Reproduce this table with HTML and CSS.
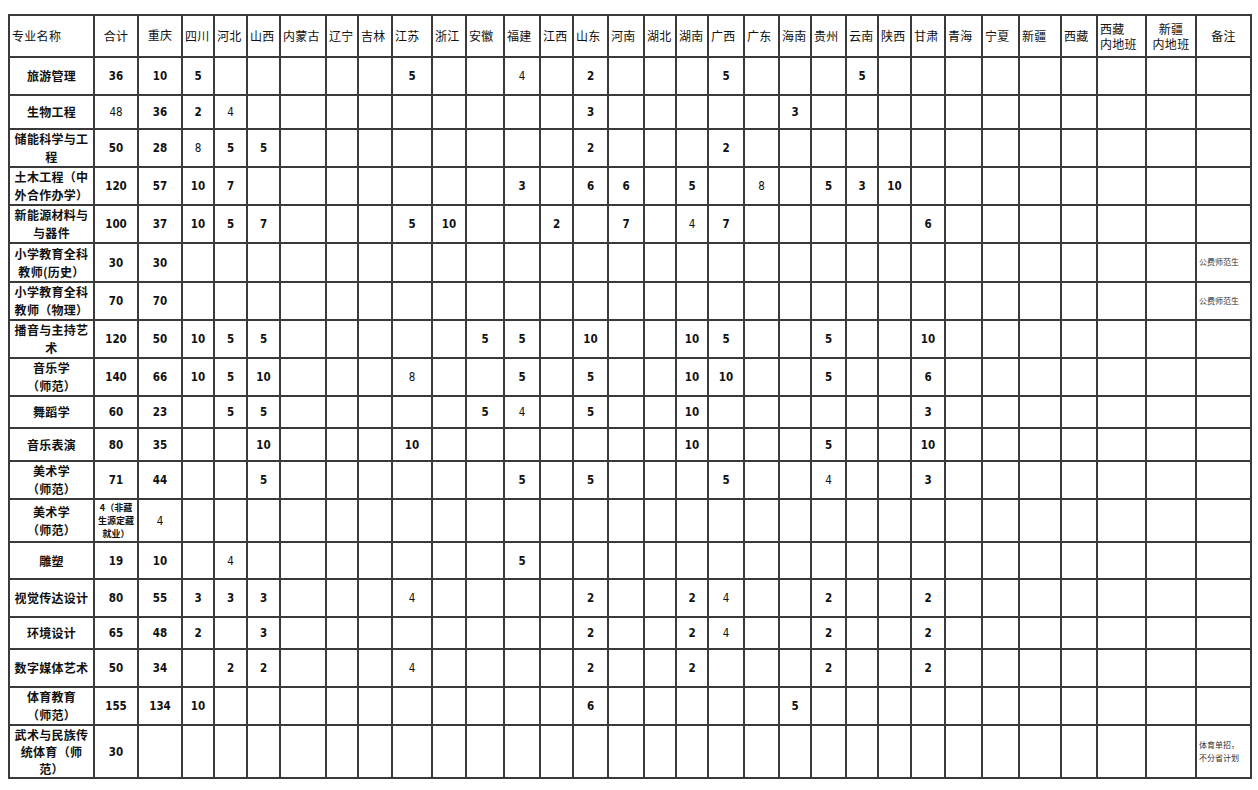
FILE: index.html
```html
<!DOCTYPE html>
<html lang="zh-CN">
<head>
<meta charset="utf-8">
<title>招生计划</title>
<link rel="stylesheet" href="styles.css">
</head>
<body>
<table class="sheet">
<colgroup>
<col class="w85"><col class="w44"><col class="w44"><col class="w32"><col class="w33"><col class="w33"><col class="w46"><col class="w32"><col class="w34"><col class="w40"><col class="w34"><col class="w38"><col class="w36"><col class="w33"><col class="w35"><col class="w36"><col class="w32"><col class="w32"><col class="w36"><col class="w35"><col class="w32"><col class="w35"><col class="w32"><col class="w33"><col class="w34"><col class="w37"><col class="w37"><col class="w42"><col class="w36"><col class="w49"><col class="w50"><col class="w55">
</colgroup>
<thead>
<tr class="h42">
<th>专业名称</th><th class="c">合计</th><th class="c up">重庆</th><th>四川</th><th>河北</th><th>山西</th><th>内蒙古</th><th>辽宁</th><th>吉林</th><th>江苏</th><th>浙江</th><th>安徽</th><th>福建</th><th>江西</th><th>山东</th><th>河南</th><th>湖北</th><th>湖南</th><th>广西</th><th>广东</th><th>海南</th><th>贵州</th><th>云南</th><th>陕西</th><th>甘肃</th><th>青海</th><th>宁夏</th><th>新疆</th><th>西藏</th><th class="two"><span class="ln">西藏</span><span class="ln">内地班</span></th><th class="c two"><span class="ln">新疆</span><span class="ln">内地班</span></th><th class="c">备注</th>
</tr>
</thead>
<tbody>
<tr class="h38"><td class="nm">旅游管理</td><td>36</td><td>10</td><td>5</td><td></td><td></td><td></td><td></td><td></td><td>5</td><td></td><td></td><td class="lt">4</td><td></td><td>2</td><td></td><td></td><td></td><td>5</td><td></td><td></td><td></td><td>5</td><td></td><td></td><td></td><td></td><td></td><td></td><td></td><td></td><td></td></tr>
<tr class="h34"><td class="nm">生物工程</td><td class="lt">48</td><td>36</td><td>2</td><td class="lt">4</td><td></td><td></td><td></td><td></td><td></td><td></td><td></td><td></td><td></td><td>3</td><td></td><td></td><td></td><td></td><td></td><td>3</td><td></td><td></td><td></td><td></td><td></td><td></td><td></td><td></td><td></td><td></td><td></td></tr>
<tr class="h38"><td class="nm">储能科学与工程</td><td>50</td><td>28</td><td class="lt">8</td><td>5</td><td>5</td><td></td><td></td><td></td><td></td><td></td><td></td><td></td><td></td><td>2</td><td></td><td></td><td></td><td>2</td><td></td><td></td><td></td><td></td><td></td><td></td><td></td><td></td><td></td><td></td><td></td><td></td><td></td></tr>
<tr class="h38"><td class="nm">土木工程（中外合作办学）</td><td>120</td><td>57</td><td>10</td><td>7</td><td></td><td></td><td></td><td></td><td></td><td></td><td></td><td>3</td><td></td><td>6</td><td>6</td><td></td><td>5</td><td></td><td class="lt">8</td><td></td><td>5</td><td>3</td><td>10</td><td></td><td></td><td></td><td></td><td></td><td></td><td></td><td></td></tr>
<tr class="h37"><td class="nm">新能源材料与与器件</td><td>100</td><td>37</td><td>10</td><td>5</td><td>7</td><td></td><td></td><td></td><td>5</td><td>10</td><td></td><td></td><td>2</td><td></td><td>7</td><td></td><td class="lt">4</td><td>7</td><td></td><td></td><td></td><td></td><td></td><td>6</td><td></td><td></td><td></td><td></td><td></td><td></td><td></td></tr>
<tr class="h39"><td class="nm">小学教育全科教师(历史）</td><td>30</td><td>30</td><td></td><td></td><td></td><td></td><td></td><td></td><td></td><td></td><td></td><td></td><td></td><td></td><td></td><td></td><td></td><td></td><td></td><td></td><td></td><td></td><td></td><td></td><td></td><td></td><td></td><td></td><td></td><td></td><td class="rm">公费师范生</td></tr>
<tr class="h37"><td class="nm">小学教育全科教师（物理）</td><td>70</td><td>70</td><td></td><td></td><td></td><td></td><td></td><td></td><td></td><td></td><td></td><td></td><td></td><td></td><td></td><td></td><td></td><td></td><td></td><td></td><td></td><td></td><td></td><td></td><td></td><td></td><td></td><td></td><td></td><td></td><td class="rm">公费师范生</td></tr>
<tr class="h38"><td class="nm">播音与主持艺术</td><td>120</td><td>50</td><td>10</td><td>5</td><td>5</td><td></td><td></td><td></td><td></td><td></td><td>5</td><td>5</td><td></td><td>10</td><td></td><td></td><td>10</td><td>5</td><td></td><td></td><td>5</td><td></td><td></td><td>10</td><td></td><td></td><td></td><td></td><td></td><td></td><td></td></tr>
<tr class="h38"><td class="nm">音乐学<br>（师范）</td><td>140</td><td>66</td><td>10</td><td>5</td><td>10</td><td></td><td></td><td></td><td class="lt">8</td><td></td><td></td><td>5</td><td></td><td>5</td><td></td><td></td><td>10</td><td>10</td><td></td><td></td><td>5</td><td></td><td></td><td>6</td><td></td><td></td><td></td><td></td><td></td><td></td><td></td></tr>
<tr class="h32"><td class="nm">舞蹈学</td><td>60</td><td>23</td><td></td><td>5</td><td>5</td><td></td><td></td><td></td><td></td><td></td><td>5</td><td class="lt">4</td><td></td><td>5</td><td></td><td></td><td>10</td><td></td><td></td><td></td><td></td><td></td><td></td><td>3</td><td></td><td></td><td></td><td></td><td></td><td></td><td></td></tr>
<tr class="h33"><td class="nm">音乐表演</td><td>80</td><td>35</td><td></td><td></td><td>10</td><td></td><td></td><td></td><td>10</td><td></td><td></td><td></td><td></td><td></td><td></td><td></td><td>10</td><td></td><td></td><td></td><td>5</td><td></td><td></td><td>10</td><td></td><td></td><td></td><td></td><td></td><td></td><td></td></tr>
<tr class="h38"><td class="nm">美术学<br>（师范）</td><td>71</td><td>44</td><td></td><td></td><td>5</td><td></td><td></td><td></td><td></td><td></td><td></td><td>5</td><td></td><td>5</td><td></td><td></td><td></td><td>5</td><td></td><td></td><td class="lt">4</td><td></td><td></td><td>3</td><td></td><td></td><td></td><td></td><td></td><td></td><td></td></tr>
<tr class="h43"><td class="nm">美术学<br>（师范）</td><td class="sm">4（非藏<br>生源定藏<br>就业）</td><td class="lt">4</td><td></td><td></td><td></td><td></td><td></td><td></td><td></td><td></td><td></td><td></td><td></td><td></td><td></td><td></td><td></td><td></td><td></td><td></td><td></td><td></td><td></td><td></td><td></td><td></td><td></td><td></td><td></td><td></td><td></td></tr>
<tr class="h37"><td class="nm">雕塑</td><td>19</td><td>10</td><td></td><td class="lt">4</td><td></td><td></td><td></td><td></td><td></td><td></td><td></td><td>5</td><td></td><td></td><td></td><td></td><td></td><td></td><td></td><td></td><td></td><td></td><td></td><td></td><td></td><td></td><td></td><td></td><td></td><td></td><td></td></tr>
<tr class="h38"><td class="nm">视觉传达设计</td><td>80</td><td>55</td><td>3</td><td>3</td><td>3</td><td></td><td></td><td></td><td class="lt">4</td><td></td><td></td><td></td><td></td><td>2</td><td></td><td></td><td>2</td><td class="lt">4</td><td></td><td></td><td>2</td><td></td><td></td><td>2</td><td></td><td></td><td></td><td></td><td></td><td></td><td></td></tr>
<tr class="h32"><td class="nm">环境设计</td><td>65</td><td>48</td><td>2</td><td></td><td>3</td><td></td><td></td><td></td><td></td><td></td><td></td><td></td><td></td><td>2</td><td></td><td></td><td>2</td><td class="lt">4</td><td></td><td></td><td>2</td><td></td><td></td><td>2</td><td></td><td></td><td></td><td></td><td></td><td></td><td></td></tr>
<tr class="h38"><td class="nm">数字媒体艺术</td><td>50</td><td>34</td><td></td><td>2</td><td>2</td><td></td><td></td><td></td><td class="lt">4</td><td></td><td></td><td></td><td></td><td>2</td><td></td><td></td><td>2</td><td></td><td></td><td></td><td>2</td><td></td><td></td><td>2</td><td></td><td></td><td></td><td></td><td></td><td></td><td></td></tr>
<tr class="h38"><td class="nm">体育教育<br>（师范）</td><td>155</td><td>134</td><td>10</td><td></td><td></td><td></td><td></td><td></td><td></td><td></td><td></td><td></td><td></td><td>6</td><td></td><td></td><td></td><td></td><td></td><td>5</td><td></td><td></td><td></td><td></td><td></td><td></td><td></td><td></td><td></td><td></td><td></td></tr>
<tr class="h53"><td class="nm tight">武术与民族传统体育（师范）</td><td>30</td><td></td><td></td><td></td><td></td><td></td><td></td><td></td><td></td><td></td><td></td><td></td><td></td><td></td><td></td><td></td><td></td><td></td><td></td><td></td><td></td><td></td><td></td><td></td><td></td><td></td><td></td><td></td><td></td><td></td><td class="rm">体育单招，<br>不分省计划</td></tr>
</tbody>
</table>
</body>
</html>
```

FILE: styles.css
```css
html, body {
  margin: 0;
  padding: 0;
  background: #ffffff;
}

.sheet {
  border-collapse: collapse;
  table-layout: fixed;
  width: 1242px;
  margin: 14px 0 0 8px;
}

.w85 { width: 85px; }
.w32 { width: 32px; }
.w33 { width: 33px; }
.w34 { width: 34px; }
.w35 { width: 35px; }
.w36 { width: 36px; }
.w37 { width: 37px; }
.w38 { width: 38px; }
.w40 { width: 40px; }
.w42 { width: 42px; }
.w44 { width: 44px; }
.w46 { width: 46px; }
.w49 { width: 49px; }
.w50 { width: 50px; }
.w55 { width: 55px; }

.h32 { height: 32px; }
.h33 { height: 33px; }
.h34 { height: 34px; }
.h37 { height: 37px; }
.h38 { height: 38px; }
.h39 { height: 39px; }
.h42 { height: 42px; }
.h43 { height: 43px; }
.h53 { height: 53px; }

.sheet th,
.sheet td {
  border: 2px solid #3a3a3a;
  padding: 0 1px;
  vertical-align: middle;
  overflow: hidden;
  color: #111111;
}

.sheet th {
  font-family: "Noto Sans CJK SC", sans-serif;
  font-weight: 400;
  font-size: 12px;
  line-height: 14px;
  letter-spacing: 0.3px;
  text-align: left;
  padding-left: 2px;
  white-space: nowrap;
}

.sheet th.c {
  text-align: center;
  padding-left: 1px;
}

.sheet th.up {
  padding-bottom: 3px;
}

.sheet th.two .ln {
  display: block;
  height: 15px;
  line-height: 15px;
  overflow: hidden;
}

.sheet td {
  font-family: "DejaVu Sans Condensed", "DejaVu Sans", sans-serif;
  font-stretch: semi-condensed;
  font-weight: 700;
  font-size: 11.5px;
  line-height: 18px;
  text-align: center;
}

.sheet td.lt {
  font-weight: 400;
}

.sheet td.nm {
  font-family: "Noto Sans CJK SC", sans-serif;
  font-weight: 700;
  font-size: 12px;
  line-height: 18px;
  letter-spacing: 0.3px;
  padding: 0 2px;
  word-break: break-all;
}

.sheet td.nm.tight {
  line-height: 17px;
}

.sheet td.sm {
  font-family: "Noto Sans CJK SC", sans-serif;
  font-weight: 700;
  font-size: 9px;
  line-height: 13px;
  letter-spacing: 0;
  padding: 0;
  white-space: nowrap;
}

.sheet td.rm {
  font-family: "Noto Sans CJK SC", sans-serif;
  font-weight: 400;
  font-size: 8px;
  line-height: 12.5px;
  color: #333333;
  text-align: left;
  padding-left: 2px;
  white-space: nowrap;
}
```
